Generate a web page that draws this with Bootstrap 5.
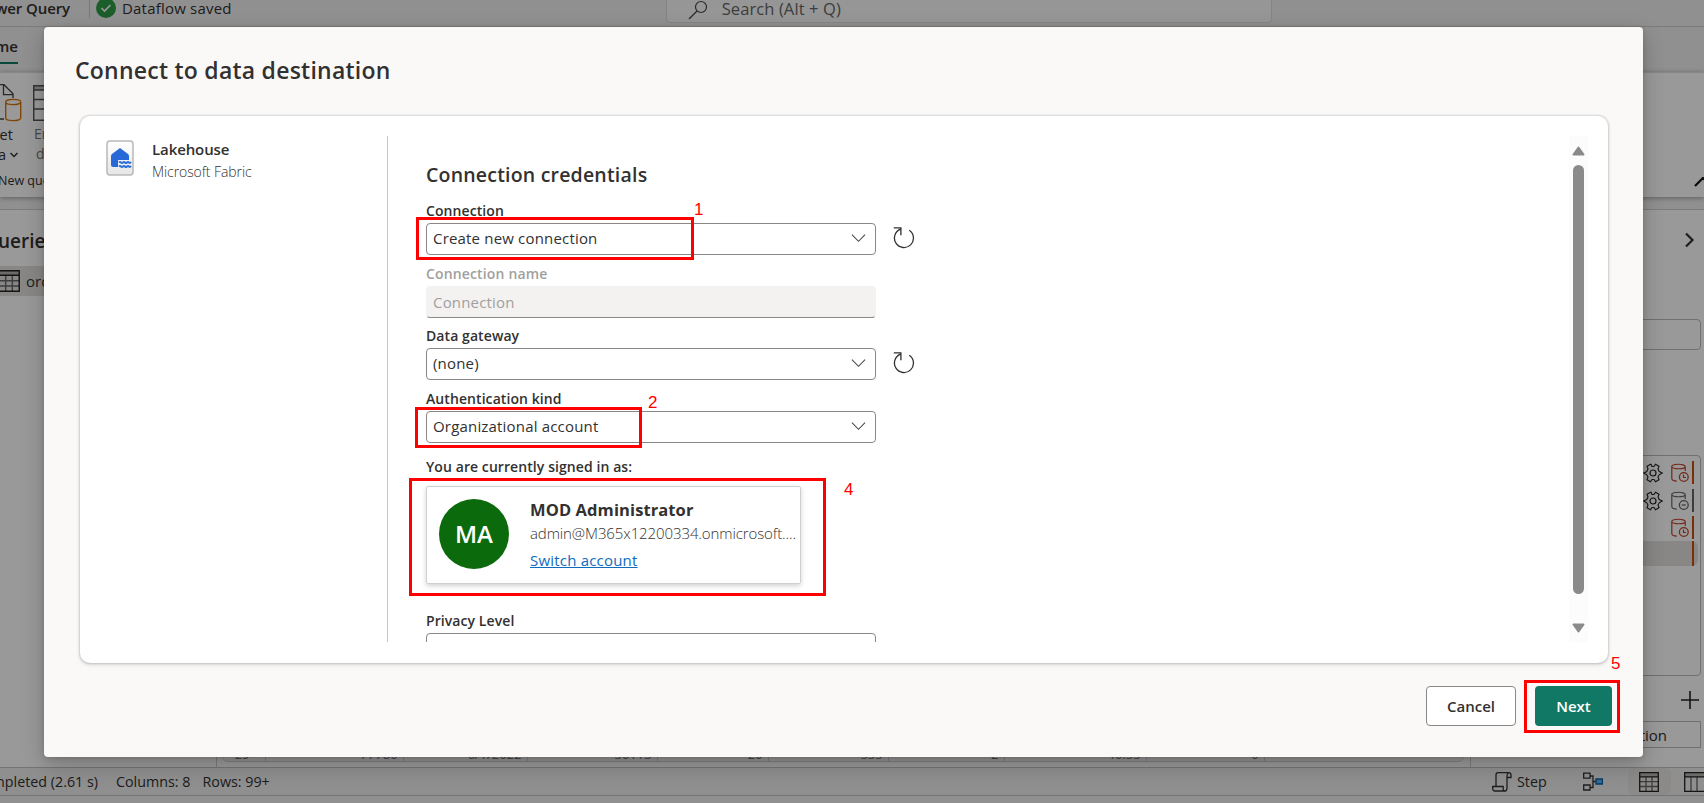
<!DOCTYPE html>
<html lang="en">
<head>
<meta charset="utf-8">
<title>Connect to data destination</title>
<link href="https://cdn.jsdelivr.net/npm/bootstrap@5.3.0/dist/css/bootstrap.min.css" rel="stylesheet">
<script src="https://cdn.jsdelivr.net/npm/bootstrap@5.3.0/dist/js/bootstrap.bundle.min.js"></script>
<style>
  html, body { height: 100%; overflow: hidden; }
  body { font-family: "Open Sans", "Noto Sans", sans-serif; font-size: 15px; line-height: 20px; color: #323130; background: #fff; }
  svg { display: block; flex: none; fill: none; }
  .semi { font-weight: 600; }
  .nowrap { white-space: nowrap; }

  /* application behind the dialog */
  .app { height: 803px; width: 1704px; background: #f0f0f0; }
  .topbar { height: 27px; border-bottom: 1px solid #cfcfcf; }
  .topbar > * { margin-top: -11px; }
  .brand { margin-left: -37px; width: 107px; text-align: right; letter-spacing: -.1px; }
  .saved { margin-left: 6px; letter-spacing: .2px; }
  .vline { width: 1px; background: #c8c8c8; }
  .search { width: 606px; height: 36px; margin-top: -17px !important; margin-left: 434px; background: #fafafa; border: 1px solid #dcdcdc; border-radius: 4px; color: #666; font-size: 16.5px; letter-spacing: .1px; }
  .tabs { height: 45px; }
  .tab-on { width: 18px; height: 37px; padding-top: 2px; border-bottom: 2px solid #117865; direction: rtl; }
  .ribbon { height: 125px; background: #fff; box-shadow: 0 1px 5px rgba(0,0,0,.35); border-top: 1px solid #e0e0e0; }
  .work { margin-top: 12px; height: 558px; border-top: 1px solid #cfcfcf; background: #fff; }
  .queries { width: 217px; border-right: 1px solid #cfcfcf; }
  .queries h2 { font-size: 19px; line-height: 24px; margin: 19px 0 0 -17px; }
  .query-on { margin-top: 13px; height: 30px; background: #e4e2e0; }
  .preview { width: 1254px; border-right: 1px solid #cfcfcf; padding: 0 6px 5px 5px; }
  .gridrow { height: 26px; border: 1px solid #d4d4d4; border-radius: 0 0 6px 6px; background: #f8f8f8; font-size: 13.5px; font-style: italic; color: #777; line-height: 30px; }
  .gridrow > div { border-right: 1px solid #d4d4d4; text-align: right; padding-right: 5px; margin-top: 2px; overflow: hidden; }
  .settings { width: 233px; padding-right: 3px; }
  .field-bg { border: 1px solid #bbb; border-radius: 4px; }
  .steps { height: 221px; margin-top: 105px; padding: 5px 6px 0 0; }
  .steprow { height: 23px; }
  .bar-o { width: 2px; height: 23px; background: #ca5010; }
  .status { height: 29px; border-top: 1px solid #c4c4c4; border-bottom: 1px solid #c4c4c4; background: #eee; font-size: 14.3px; }
  .tray { height: 100%; }
  .dim { inset: 0; background: rgba(0,0,0,.4); }

  /* dialog */
  .dialog { left: 44px; top: 27px; width: 1599px; height: 730px; background: #faf9f8; border-radius: 4px; box-shadow: 0 8px 22px rgba(0,0,0,.22), 0 1px 5px rgba(0,0,0,.15); padding: 27px 35px 31px 31px; }
  .dialog h1 { font-size: 23px; line-height: 32px; font-weight: 600; margin: 0 0 30px; letter-spacing: .24px; }
  .panel { height: 547px; width: 1528px; margin-left: 5px; background: #fff; border-radius: 10px; box-shadow: 0 0 2px 1px rgba(0,0,0,.13), 0 2px 4px rgba(0,0,0,.12); padding: 20px 20px 21px 26px; }
  .source { width: 282px; border-right: 1px solid #c8c6c4; }
  .creds { padding: 25px 0 0 38px; overflow: hidden; }
  .creds h2 { font-size: 19.5px; line-height: 28px; font-weight: 600; margin: 0 0 12px; letter-spacing: .2px; }
  .lbl { font-weight: 600; font-size: 14px; line-height: 20px; margin-bottom: 2px; letter-spacing: .08px; }
  .box { width: 450px; height: 32px; border: 1px solid #8a8886; border-radius: 4px; padding: 0 9px 2px 6px; background: #fff; letter-spacing: .18px; }
  .box.off { background: #f3f2f1; border-color: #f3f2f1 #f3f2f1 #8a8886; color: #a19f9d; padding-bottom: 0; }
  .fld { margin-bottom: 8.67px; }
  .acct { width: 375px; height: 98px; border: 1px solid #d2d0ce; border-radius: 2px; box-shadow: 0 2px 5px rgba(0,0,0,.18); padding: 0 5px 2px 12px; margin: 9px 0 27px; }
  .avatar { flex: none; width: 70px; height: 70px; background: #0b6a0b; color: #fff; font-size: 24px; font-weight: 600; }
  .sbar { width: 19px; background: #fcfcfc; padding: 10px 0 9px; }
  .thumb { width: 11px; height: 429px; border-radius: 6px; background: #8a8a8a; }
  .btn-dlg { height: 40px; border-radius: 4px; font-weight: 600; font-size: 15px; padding: 0; }
  .btn-no { width: 90px; background: #fff; border: 1px solid #8a8886; color: #323130; }
  .btn-go { width: 77px; background: #117865; color: #fff; border: 0; margin-left: 19px; }

  /* red step markers */
  .mark-box { border: 3px solid #f00; }
  .mark-no { color: #f00; font: 17px/18px "Liberation Sans", sans-serif; }
</style>
</head>
<body>
<svg width="0" height="0" class="position-absolute">
  <defs>
    <symbol id="chev" viewBox="0 0 16 10"><path d="M1 1.5 8 8.5 15 1.5" stroke="#484644" stroke-width="1.1"/></symbol>
    <symbol id="redo" viewBox="0 0 22 22"><path d="M7.500 2.200A9.500 9.500 0 1 0 16.300 3.200M.8.900H7.900V8.300" stroke="#323130" stroke-width="1.300"/></symbol>
    <symbol id="gear" viewBox="0 0 20 20"><path d="M8 1.2 9 3.500h2L12.500 1.200 16 3.200 15 6l1.200 2.500L19.300 10 16.200 11.800 15 14l1 2.800-3.500 2L11 16.500H9l-1.500 2.300-3.500-2L5 14 3.800 11.800.7 10 3.800 8.500 5 6 4 3.200 7.500 1.200Z" stroke="#222" stroke-width="1.1"/><circle cx="10" cy="10" r="3" stroke="#222" stroke-width="1.2"/></symbol>
    <symbol id="db" viewBox="0 0 18 20"><path d="M.8 3.500v12c0 1.500 2 2.500 5 2.700M14.200 3.500V8M.8 3.500c0 3 13.400 3 13.400 0S.8.500.8 3.500Z" stroke="currentColor" stroke-width="1.200"/><circle cx="12.800" cy="14" r="4.400" stroke="currentColor" stroke-width="1.300"/></symbol>
    <symbol id="dbclock" viewBox="0 0 18 20"><use href="#db"/><path d="M12.500 11.500v3h2.500" stroke="currentColor" stroke-width="1.200"/></symbol>
    <symbol id="dbminus" viewBox="0 0 18 20"><use href="#db"/><path d="M10.800 14h4" stroke="currentColor" stroke-width="1.300"/></symbol>
    <symbol id="tbl" viewBox="0 0 20 20"><path d="M1 .7h18v4H1z" fill="#b5b2ae"/><path d="M.7 9.700h18.600M.7 14.500h18.600M7 5v14.500M13 5v14.500" stroke="#666" stroke-width="1.300"/><path d="M.7.700h18.600v18.600H.7zM.7 4.800h18.600" stroke="#222" stroke-width="1.300"/></symbol>
  </defs>
</svg>

<div class="app d-flex flex-column">
  <div class="topbar d-flex align-items-center">
    <div class="brand semi nowrap">Power Query</div>
    <div class="vline align-self-stretch" style="margin:0 0 8px 19px"></div>
    <svg width="20" height="20" viewBox="0 0 20 20" style="margin-left:6px"><circle cx="10" cy="10" r="10" fill="#2d9d46"/><path d="m5.500 10 3 3 6-6" stroke="#fff" stroke-width="1.600"/></svg>
    <div class="saved nowrap">Dataflow saved</div>
    <div class="search d-flex align-items-center">
      <svg width="20" height="20" viewBox="0 0 20 20" style="margin:10px 14px 0 21px"><circle cx="13" cy="7" r="5.500" stroke="#444" stroke-width="1.200"/><path d="m9 11-8 8" stroke="#444" stroke-width="1.200"/></svg>
      <div style="margin-top:9px">Search (Alt + Q)</div>
    </div>
  </div>
  <div class="tabs"><div class="tab-on semi nowrap d-flex align-items-center">Home</div></div>
  <div class="ribbon d-flex">
    <div style="width:24px;padding-top:11px">
      <svg width="22" height="38" viewBox="0 0 22 38"><path d="M0 .7h4l9 9V14M3.500.7v10h9M0 35h4" stroke="#444" stroke-width="1.300"/><path d="M5.700 18v16c0 3.500 15 3.500 15 0V18M5.700 18c0 3.500 15 3.500 15 0s-15-3.500-15 0Z" stroke="#d9730d" stroke-width="1.400"/></svg>
      <div class="nowrap" style="margin:3px 0 0 -11px;font-size:14.500px">Get</div>
      <div class="nowrap d-flex align-items-center" style="margin:0 0 0 -24px;font-size:14.500px">data<svg class="ms-1" width="8" height="6" viewBox="0 0 8 6"><path d="m.5 1 3.500 3.500L7.500 1" stroke="#323130" stroke-width="1.500"/></svg></div>
      <div class="nowrap" style="margin:6px 0 0 -2px;font-size:12.500px">New query</div>
    </div>
    <div style="padding:12px 0 0 9px;color:#777">
      <svg width="20" height="36" viewBox="0 0 20 36"><path d="M1 1h19v4H1z" fill="#c4c1be"/><path d="M20 .7H.7v34.600H20M0 5h20M.7 14.500H20M.7 24H20" stroke="#555" stroke-width="1.500"/></svg>
      <div style="font-size:14px;margin:3px 0 0 1px">Enter</div><div style="font-size:14px;margin-left:3px">data</div>
    </div>
    <svg class="ms-auto align-self-end" width="10" height="10" viewBox="0 0 10 10" style="margin-bottom:10px"><path d="m1 9 8-8 8 8" stroke="#111" stroke-width="2.200"/></svg>
  </div>
  <div class="work d-flex">
    <div class="queries">
      <h2 class="semi">Queries</h2>
      <div class="query-on d-flex align-items-center">
        <svg width="22" height="22" style="margin:0 6px 0 -2px"><use href="#tbl"/></svg>orders
      </div>
    </div>
    <div class="preview d-flex flex-column justify-content-end">
      <div class="gridrow d-flex">
        <div style="width:43px;padding-right:15px">29</div><div style="width:138px">77780</div><div style="width:124px">6/1/2022</div><div style="width:130px">50113</div><div style="width:111px">20</div><div style="width:120px">555</div><div style="width:116px">2</div><div style="width:142px">40.55</div><div style="width:118px">0</div>
      </div>
    </div>
    <div class="settings">
      <svg class="ms-auto" width="10" height="16" viewBox="0 0 10 16" style="margin:22px 6px 0"><path d="m1 1.500 6.500 6.500L1 14.500" stroke="#333" stroke-width="2.200"/></svg>
      <div class="field-bg" style="height:31px;margin-top:71px"></div>
      <div class="field-bg steps">
        <div class="steprow d-flex justify-content-end align-items-center"><svg width="20" height="20"><use href="#gear"/></svg><svg width="18" height="20" style="margin:0 3px 0 8px;color:#c4442c"><use href="#dbclock"/></svg><div class="bar-o"></div></div>
        <div class="steprow d-flex justify-content-end align-items-center" style="margin-top:5px"><svg width="20" height="20"><use href="#gear"/></svg><svg width="18" height="20" style="margin:0 3px 0 8px;color:#666"><use href="#dbminus"/></svg><div class="bar-o" style="background:#666"></div></div>
        <div class="steprow d-flex justify-content-end align-items-center" style="margin-top:4px"><svg width="18" height="20" style="margin-right:3px;color:#c4442c"><use href="#dbclock"/></svg><div class="bar-o"></div></div>
        <div class="d-flex justify-content-end rounded-end-2" style="height:25px;margin:2px -4px 0 0;padding-right:4px;background:#e4e2e0"><div class="bar-o h-100"></div></div>
      </div>
      <svg class="ms-auto" width="18" height="18" viewBox="0 0 18 18" style="margin:15px 2px 12px auto"><path d="M0 9h18M9 0v18" stroke="#222" stroke-width="1.600"/></svg>
      <div class="field-bg rounded-0 d-flex justify-content-end align-items-center" style="height:27px;padding-right:33px">Transformation</div>
    </div>
  </div>
  <div class="status d-flex align-items-center nowrap">
    <div style="width:98px;direction:rtl"><bdo dir="ltr">Completed (2.61 s)</bdo></div>
    <div style="margin-left:18px">Columns: 8</div><div style="margin-left:12px">Rows: 99+</div>
    <div class="tray ms-auto d-flex align-items-center" style="width:212px">
      <svg width="20" height="20" viewBox="0 0 20 20"><path d="M4 14V3q0-2.300 2-2.300h10.500q2.500 0 2.500 2.300v2.500h-3.500M16.500 1Q15 1.500 15 4v12q0 3-2 3H3q-2.300 0-2.300-2.500V14.500h10.500V17q0 2.300 2 2.300" stroke="#333" stroke-width="1.300"/></svg>
      <div style="margin-left:5px;width:67px">Step</div>
      <svg width="20" height="20" viewBox="0 0 20 20"><path d="M.7 1.200H7v5H.7zM.7 13H7v5H.7zM7 4h3v11.500H7M10 9.500h3" stroke="#333" stroke-width="1.300"/><path d="M13 7h6.500v5H13z" fill="#69afe5" stroke="#0063b1" stroke-width="1.300"/></svg>
      <div class="h-100 d-flex align-items-center justify-content-center rounded" style="width:44px;margin:0 13px 0 25px;background:#e9e7e5"><svg width="20" height="20"><use href="#tbl"/></svg></div>
      <svg width="20" height="20" viewBox="0 0 20 20"><path d="M1 1h19v4H1z" fill="#b5b2ae"/><path d="M7 5v14.500M13 5v14.500" stroke="#666" stroke-width="1.300"/><path d="M20 .7H.7v18.600H20M.7 4.800H20" stroke="#222" stroke-width="1.300"/></svg>
    </div>
  </div>
</div>
<div class="dim position-absolute"></div>

<div class="dialog position-absolute">
  <h1>Connect to data destination</h1>
  <div class="panel d-flex">
    <div class="source d-flex">
      <svg width="28" height="36" viewBox="0 0 28 36" style="margin-top:4px"><defs><linearGradient id="g1" x2="0" y2="1"><stop stop-color="#fff"/><stop offset="1" stop-color="#e6e6e6"/></linearGradient></defs><rect x="1" y="1" width="26" height="34" rx="3" fill="url(#g1)" stroke="#b9b9b9" stroke-width="1.500"/><path d="m14 8 8 6q1 1 1 2v4H12v7H7q-2 0-2-2v-9q0-1 1-2Z" fill="#2767d8"/><path d="M13 22.500q1-1 2 0t2 0 2 0 2 0 2 0 2-.5M13 26.500q1-1 2 0t2 0 2 0 2 0 2 0 2-.5" stroke="#2b6fdc" stroke-width="2"/></svg>
      <div style="margin:3px 0 0 18px"><div class="semi" style="letter-spacing:-.1px">Lakehouse</div><div class="fw-light" style="margin-top:3px;font-size:14px;letter-spacing:-.08px">Microsoft Fabric</div></div>
    </div>
    <div class="creds flex-grow-1">
      <h2>Connection credentials</h2>
      <div class="fld"><div class="lbl">Connection</div><div class="d-flex align-items-center"><div class="box d-flex align-items-center justify-content-between">Create new connection<svg width="15" height="10"><use href="#chev"/></svg></div><svg width="22" height="22" style="margin:-2px 0 0 17px"><use href="#redo"/></svg></div></div>
      <div class="fld"><div class="lbl" style="color:#a19f9d;letter-spacing:.15px">Connection name</div><div class="box off d-flex align-items-center">Connection</div></div>
      <div class="fld"><div class="lbl">Data gateway</div><div class="d-flex align-items-center"><div class="box d-flex align-items-center justify-content-between">(none)<svg width="15" height="10"><use href="#chev"/></svg></div><svg width="22" height="22" style="margin:-2px 0 0 17px"><use href="#redo"/></svg></div></div>
      <div><div class="lbl">Authentication kind</div><div class="box d-flex align-items-center justify-content-between">Organizational account<svg width="15" height="10"><use href="#chev"/></svg></div></div>
      <div class="lbl" style="margin:14px 0 0">You are currently signed in as:</div>
      <div class="acct d-flex align-items-center">
        <div class="avatar rounded-circle d-flex align-items-center justify-content-center">MA</div>
        <div class="nowrap" style="margin:5px 0 0 21px">
          <div class="fw-bold" style="font-size:16.500px;line-height:24px;letter-spacing:.1px">MOD Administrator</div>
          <div class="fw-light" style="line-height:23px;letter-spacing:-.1px">admin@M365x12200334.onmicrosoft....</div>
          <a href="#" style="color:#0f6cbd;line-height:30px;letter-spacing:.2px">Switch account</a>
        </div>
      </div>
      <div class="lbl">Privacy Level</div><div class="box"></div>
    </div>
    <div class="sbar d-flex flex-column align-items-center justify-content-between">
      <svg width="13" height="10" viewBox="0 0 13 10"><path d="M6.500 1.500 11.500 8.500h-10Z" fill="#8a8a8a" stroke="#8a8a8a" stroke-width="2" stroke-linejoin="round"/></svg>
      <div class="thumb" style="margin-bottom:20px"></div>
      <svg width="13" height="10" viewBox="0 0 13 10"><path d="M6.500 8.500 11.500 1.500h-10Z" fill="#8a8a8a" stroke="#8a8a8a" stroke-width="2" stroke-linejoin="round"/></svg>
    </div>
  </div>
  <div class="d-flex justify-content-end" style="margin:23px -4px 0 0"><button class="btn btn-dlg btn-no">Cancel</button><button class="btn btn-dlg btn-go">Next</button></div>
</div>

<div class="mark-box position-absolute" style="left:416px;top:217px;width:278px;height:43px"></div>
<div class="mark-box position-absolute" style="left:415px;top:407px;width:227px;height:41px"></div>
<div class="mark-box position-absolute" style="left:409px;top:478px;width:417px;height:118px"></div>
<div class="mark-box position-absolute" style="left:1524px;top:680px;width:96px;height:53px"></div>
<div class="mark-no position-absolute" style="left:694px;top:201px">1</div>
<div class="mark-no position-absolute" style="left:648px;top:394px">2</div>
<div class="mark-no position-absolute" style="left:844px;top:481px">4</div>
<div class="mark-no position-absolute" style="left:1611px;top:655px">5</div>
</body>
</html>
